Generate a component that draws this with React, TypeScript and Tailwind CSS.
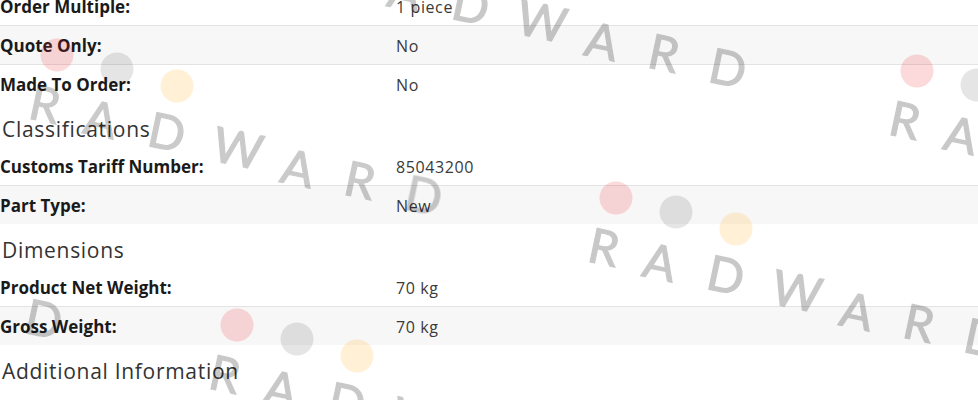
import React from "react";

type Row = { label: string; value: string; shaded?: boolean };

const LETTERS: [string, number, number][] = [
  ["R", -12, 49],
  ["A", 44, 64],
  ["D", 110, 77],
  ["W", 181, 93],
  ["A", 241, 113],
  ["R", 303, 125],
  ["D", 367, 140],
];

const INSTANCES: [number, number][] = [
  [361, -72],
  [57, 55],
  [616, 198],
  [917, 71],
  [237, 325],
  [-323, 179],
];

function Watermark() {
  return (
    <svg
      className="pointer-events-none absolute left-0 top-0"
      width={978}
      height={400}
      viewBox="0 0 978 400"
    >
      {INSTANCES.map(([x, y], i) => (
        <g key={i}>
          <circle cx={x} cy={y} r={16.5} fill="rgba(237,28,36,0.17)" />
          <circle cx={x + 60} cy={y + 14} r={16.5} fill="rgba(0,0,0,0.1)" />
          <circle cx={x + 120} cy={y + 31} r={16.5} fill="rgba(255,170,30,0.18)" />
          <g opacity={0.21}>
            {LETTERS.map(([ch, dx, dy], j) => (
              <g key={j} transform={`translate(${x + dx} ${y + dy}) rotate(12)`}>
                <text
                  x={0}
                  y={17.5}
                  textAnchor="middle"
                  fontFamily="Lato, 'Open Sans', sans-serif"
                  fontSize={48}
                  fill="#000"
                  stroke="#000"
                  strokeWidth={1.2}
                >
                  {ch}
                </text>
              </g>
            ))}
          </g>
        </g>
      ))}
    </svg>
  );
}

const labelCls = "pt-[2px] text-[17px] font-bold leading-6 text-[#1a1a1a]";
const valueCls = "pt-[2px] text-[16px] leading-6 tracking-[0.6px] text-[#3a3a3a]";

function RowView({ r, first }: { r: Row; first?: boolean }) {
  return (
    <div
      className={`grid grid-cols-[396px_1fr] items-center ${
        first ? "h-[38px]" : "h-[39px] border-t border-[#e3e3e3]"
      } ${r.shaded ? "bg-[#f7f7f7]" : "bg-white"}`}
    >
      <div className={labelCls}>{r.label}</div>
      <div className={valueCls}>{r.value}</div>
    </div>
  );
}

function Table({ rows, noFirstBorder = true }: { rows: Row[]; noFirstBorder?: boolean }) {
  return (
    <div>
      {rows.map((r, i) => (
        <RowView key={r.label} r={r} first={noFirstBorder && i === 0} />
      ))}
    </div>
  );
}

function Heading({ children }: { children: React.ReactNode }) {
  return (
    <div className="h-[44px] pl-[2px] pt-3 text-[21px] leading-7 tracking-[0.7px] text-[#333333]">
      {children}
    </div>
  );
}

export default function App() {
  return (
    <div className="relative h-[400px] w-[978px] overflow-hidden bg-white font-['Open_Sans',sans-serif]">
      <div className="-mt-[14px]">
        <Table
          noFirstBorder={false}
          rows={[
            { label: "Order Multiple:", value: "1 piece" },
            { label: "Quote Only:", value: "No", shaded: true },
            { label: "Made To Order:", value: "No" },
          ]}
        />
        <Heading>Classifications</Heading>
        <Table
          rows={[
            { label: "Customs Tariff Number:", value: "85043200" },
            { label: "Part Type:", value: "New", shaded: true },
          ]}
        />
        <Heading>Dimensions</Heading>
        <Table
          rows={[
            { label: "Product Net Weight:", value: "70 kg" },
            { label: "Gross Weight:", value: "70 kg", shaded: true },
          ]}
        />
        <Heading>Additional Information</Heading>
      </div>
      <Watermark />
    </div>
  );
}
